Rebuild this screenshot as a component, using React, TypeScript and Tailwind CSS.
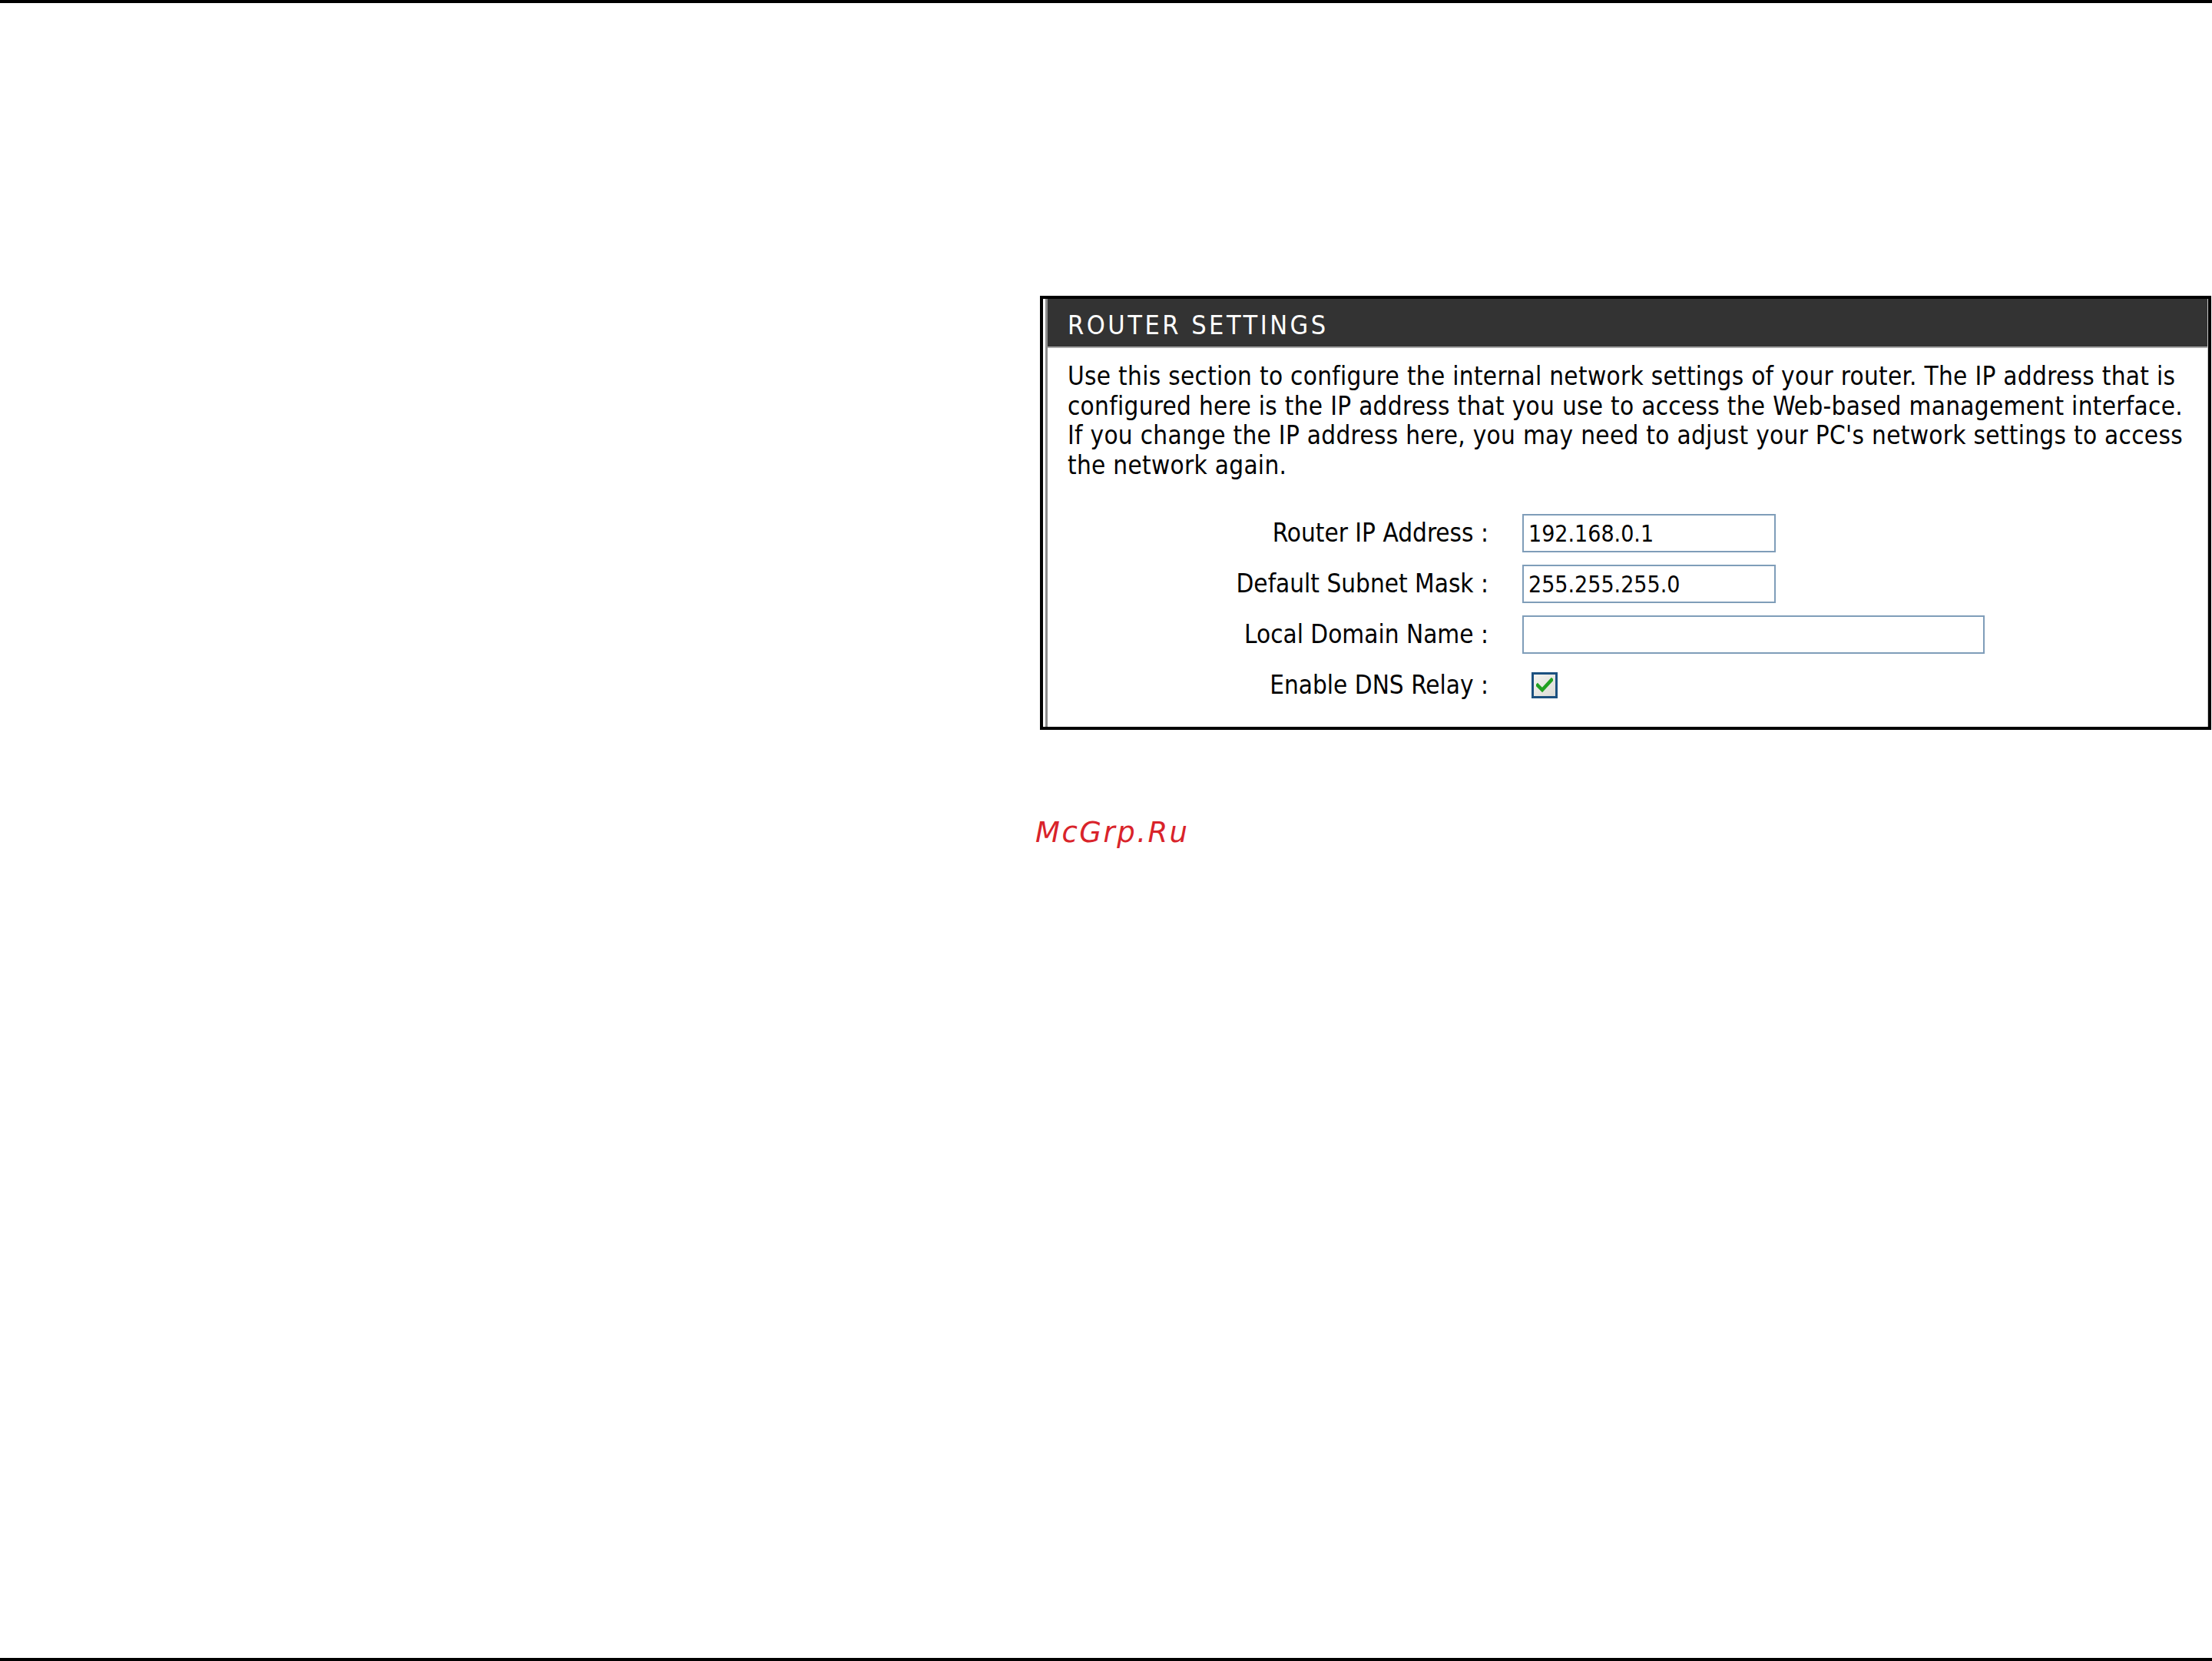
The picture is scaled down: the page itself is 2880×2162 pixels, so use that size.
export default function App() {
  const font = { fontFamily: '"DejaVu Sans Condensed", "DejaVu Sans", "Liberation Sans", sans-serif' };
  const lines = [
    "Use this section to configure the internal network settings of your router. The IP address that is",
    "configured here is the IP address that you use to access the Web-based management interface.",
    "If you change the IP address here, you may need to adjust your PC's network settings to access",
    "the network again.",
  ];
  return (
    <div className="w-[2880px] h-[2162px] bg-white border-t-4 border-b-4 border-black flex flex-col overflow-hidden">
      <div className="pt-[381px] pl-[1348px] pr-[1px] flex flex-col" style={font}>
        <div className="ml-[6px] border-4 border-black bg-white">
          <div className="ml-[3px] border-l-[3px] border-l-[#8c8c8c] border-r border-r-[#c8c8c8] flex flex-col">
            <div className="h-[64px] bg-[#333333] border-b-2 border-b-[#a8a8a8] flex items-center pl-[26px] pt-[6px]">
              <h2 className="text-white text-[34px] tracking-[3.5px] leading-none">ROUTER SETTINGS</h2>
            </div>
            <div className="pl-[26px] pt-[18px] flex flex-col text-[33px] tracking-[0.3px] leading-[38.5px] text-black">
              {lines.map((l) => (
                <p key={l} className="whitespace-nowrap">{l}</p>
              ))}
            </div>
            <div className="mt-[36px] pb-[21px] grid grid-cols-[574px_auto] gap-x-[44px] text-[33px] text-black">
              <div className="h-[66px] flex items-center justify-end whitespace-nowrap">Router IP Address :</div>
              <div className="h-[66px] flex items-center">
                <div className="w-[330px] h-[50px] border-2 border-[#7f9db9] flex items-center pl-[6px] text-[30px]">192.168.0.1</div>
              </div>
              <div className="h-[66px] flex items-center justify-end whitespace-nowrap">Default Subnet Mask :</div>
              <div className="h-[66px] flex items-center">
                <div className="w-[330px] h-[50px] border-2 border-[#7f9db9] flex items-center pl-[6px] text-[30px]">255.255.255.0</div>
              </div>
              <div className="h-[66px] flex items-center justify-end whitespace-nowrap">Local Domain Name :</div>
              <div className="h-[66px] flex items-center">
                <div className="w-[602px] h-[50px] border-2 border-[#7f9db9]"></div>
              </div>
              <div className="h-[66px] flex items-center justify-end whitespace-nowrap">Enable DNS Relay :</div>
              <div className="h-[66px] flex items-center pl-[12px]">
                <div className="w-[34px] h-[34px] border-[3px] border-[#1c5180] bg-gradient-to-br from-[#f4f4f0] to-[#dcdcd6] flex items-center justify-center">
                  <svg width="22" height="20" viewBox="0 0 22 20">
                    <path d="M2 10 L8 16 L20 3" fill="none" stroke="#21a121" strokeWidth="4.5" strokeLinecap="square" />
                  </svg>
                </div>
              </div>
            </div>
          </div>
        </div>
        <div
          className="mt-[112px] text-[37px] leading-[44px] italic text-[#d9232a] tracking-[2.5px]"
          style={{ fontFamily: '"DejaVu Sans", sans-serif' }}
        >
          McGrp.Ru
        </div>
      </div>
    </div>
  );
}
